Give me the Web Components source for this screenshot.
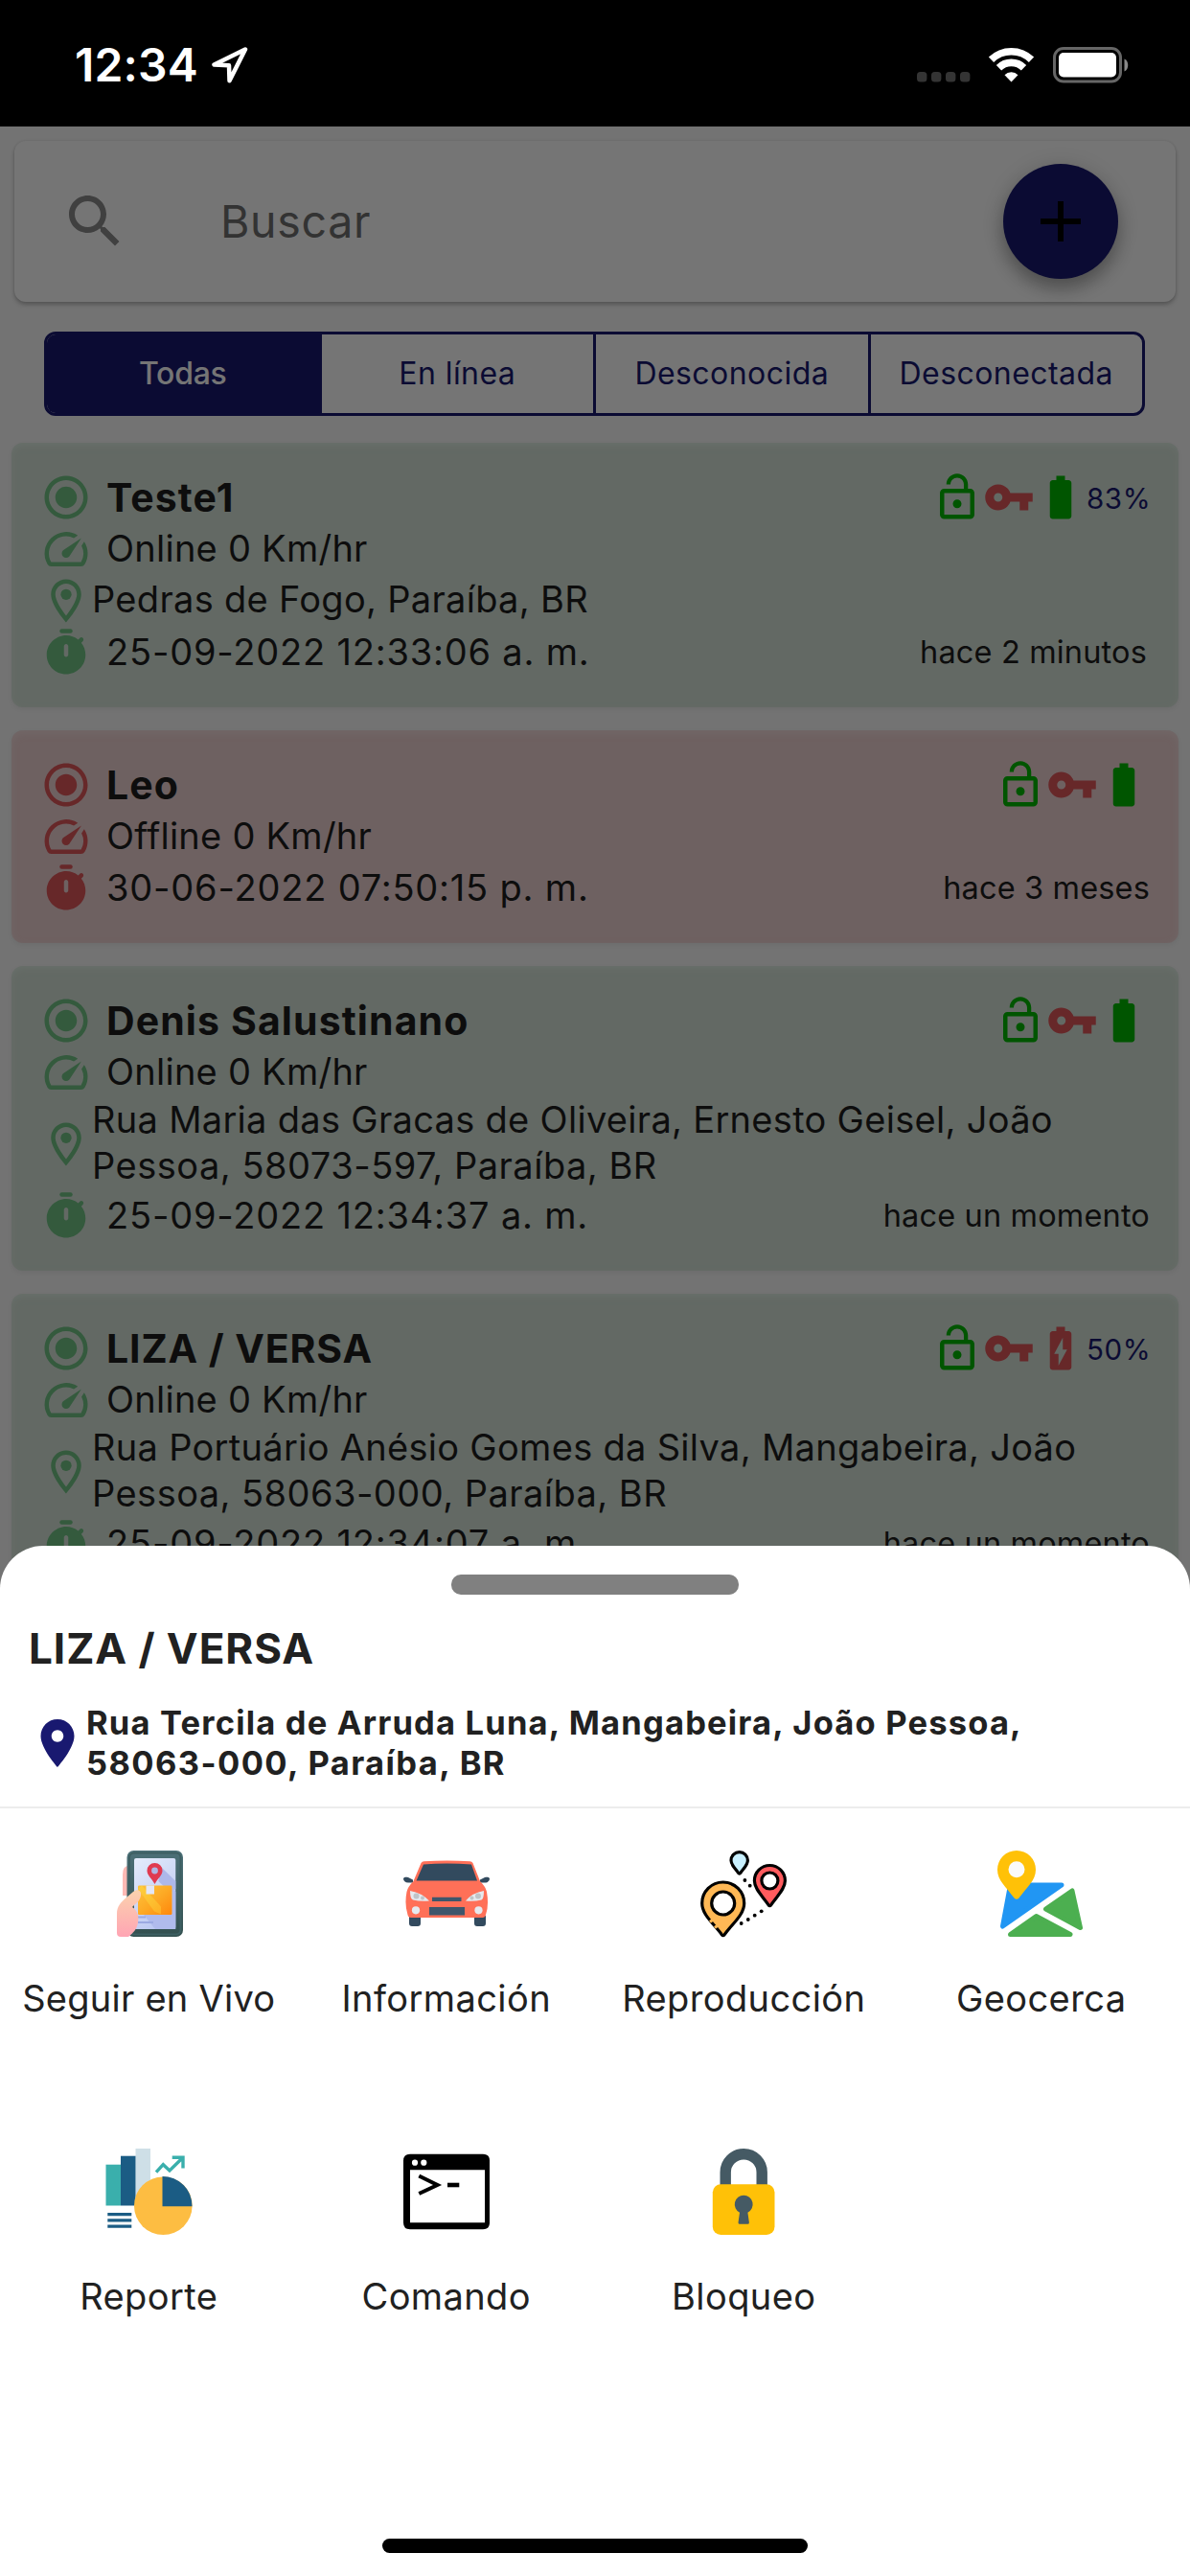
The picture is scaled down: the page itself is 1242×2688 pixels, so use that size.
<!DOCTYPE html>
<html lang="es">
<head>
<meta charset="utf-8">
<title>Dispositivos</title>
<style>
  html, body {
    margin: 0;
    height: 100%;
    background: #fafafa;
  }

  body {
    font-family: Inter, Roboto, "Liberation Sans", sans-serif;
    color: #212121;
    overflow: hidden;
  }
</style>
</head>
<body>
<tracker-app>
  <status-bar slot="status">12:34</status-bar>

  <search-bar>Buscar</search-bar>

  <filter-tabs>
    <filter-tab selected>Todas</filter-tab>
    <filter-tab>En línea</filter-tab>
    <filter-tab>Desconocida</filter-tab>
    <filter-tab>Desconectada</filter-tab>
  </filter-tabs>

  <device-card battery="full">
    <span slot="name">Teste1</span>
    <span slot="level">83%</span>
    <span slot="speed">Online 0 Km/hr</span>
    <span slot="address">Pedras de Fogo, Paraíba, BR</span>
    <span slot="date">25-09-2022 12:33:06 a. m.</span>
    <span slot="ago" style="margin-right:3px">hace 2 minutos</span>
  </device-card>

  <device-card offline battery="full">
    <span slot="name">Leo</span>
    <span slot="speed">Offline 0 Km/hr</span>
    <span slot="date">30-06-2022 07:50:15 p. m.</span>
    <span slot="ago">hace 3 meses</span>
  </device-card>

  <device-card battery="full">
    <span slot="name">Denis Salustinano</span>
    <span slot="speed">Online 0 Km/hr</span>
    <span slot="address">Rua Maria das Gracas de Oliveira, Ernesto Geisel, João<br><span style="letter-spacing:.5px">Pessoa, 58073-597, Paraíba, BR</span></span>
    <span slot="date">25-09-2022 12:34:37 a. m.</span>
    <span slot="ago">hace un momento</span>
  </device-card>

  <device-card battery="charging">
    <span slot="name" style="letter-spacing:.9px">LIZA / VERSA</span>
    <span slot="level">50%</span>
    <span slot="speed">Online 0 Km/hr</span>
    <span slot="address">Rua Portuário Anésio Gomes da Silva, Mangabeira, João<br><span style="letter-spacing:.45px">Pessoa, 58063-000, Paraíba, BR</span></span>
    <span slot="date">25-09-2022 12:34:07 a. m.</span>
    <span slot="ago">hace un momento</span>
  </device-card>

  <bottom-sheet slot="sheet">
    <span slot="title">LIZA / VERSA</span>
    <span slot="address">Rua Tercila de Arruda Luna, Mangabeira, João Pessoa,<br><span style="letter-spacing:1.4px">58063-000, Paraíba, BR</span></span>
    <action-tile icon="live" style="letter-spacing:.25px">Seguir en Vivo</action-tile>
    <action-tile icon="car">Información</action-tile>
    <action-tile icon="route">Reproducción</action-tile>
    <action-tile icon="fence">Geocerca</action-tile>
    <action-tile icon="report">Reporte</action-tile>
    <action-tile icon="command">Comando</action-tile>
    <action-tile icon="padlock">Bloqueo</action-tile>
  </bottom-sheet>
</tracker-app>

<script>
// Single colour glyphs, 24 unit grid
const glyphs = {
  search: '<path d="M15.5 14h-.79l-.28-.27C15.41 12.59 16 11.11 16 9.5 16 5.91 13.09 3 9.5 3S3 5.91 3 9.5 5.91 16 9.5 16c1.61 0 3.09-.59 4.23-1.57l.27.28v.79l5 4.99L20.49 19l-4.99-5zm-6 0C7.01 14 5 11.99 5 9.5S7.01 5 9.5 5 14 7.01 14 9.5 11.99 14 9.5 14z"/>',
  add: '<path d="M19 13h-6v6h-2v-6H5v-2h6V5h2v6h6v2z"/>',
  radio: '<path d="M12 7c-2.76 0-5 2.24-5 5s2.24 5 5 5 5-2.24 5-5-2.24-5-5-5zm0-5C6.48 2 2 6.48 2 12s4.48 10 10 10 10-4.48 10-10S17.52 2 12 2zm0 18c-4.42 0-8-3.58-8-8s3.58-8 8-8 8 3.58 8 8-3.58 8-8 8z"/>',
  speed: '<path d="M20.38 8.57l-1.23 1.85a8 8 0 0 1-.22 7.58H5.07A8 8 0 0 1 15.58 6.85l1.85-1.23A10 10 0 0 0 3.35 19a2 2 0 0 0 1.72 1h13.85a2 2 0 0 0 1.74-1 10 10 0 0 0-.27-10.44zm-9.79 6.84a2 2 0 0 0 2.83 0l5.66-8.49-8.49 5.66a2 2 0 0 0 0 2.83z"/>',
  place: '<path d="M12 2C8.13 2 5 5.13 5 9c0 5.25 7 13 7 13s7-7.75 7-13c0-3.87-3.13-7-7-7zM7 9c0-2.76 2.24-5 5-5s5 2.24 5 5c0 2.88-2.88 7.19-5 9.88C9.92 16.21 7 11.85 7 9z"/><circle cx="12" cy="9" r="2.5"/>',
  placeFill: '<path d="M12 2C8.13 2 5 5.13 5 9c0 5.25 7 13 7 13s7-7.75 7-13c0-3.87-3.13-7-7-7zm0 9.5c-1.38 0-2.5-1.12-2.5-2.5s1.12-2.5 2.5-2.5 2.5 1.12 2.5 2.5-1.12 2.5-2.5 2.5z"/>',
  timer: '<rect x="9" y="1" width="6" height="2" rx="1"/><path fill-rule="evenodd" d="M19.03 7.39l.75-.75c.38-.38.39-1.01 0-1.4l-.01-.01c-.39-.39-1.01-.38-1.4 0l-.75.75C16.07 4.74 14.12 4 12 4c-4.8 0-8.88 3.96-9 8.76C2.87 17.84 6.94 22 12 22c4.98 0 9-4.03 9-9 0-2.12-.74-4.07-1.97-5.61zM13 13c0 .55-.45 1-1 1s-1-.45-1-1V9c0-.55.45-1 1-1s1 .45 1 1v4z"/>',
  lockOpen: '<path d="M12 17c1.1 0 2-.9 2-2s-.9-2-2-2-2 .9-2 2 .9 2 2 2zm6-9h-1V6c0-2.76-2.24-5-5-5S7 3.24 7 6h1.9c0-1.71 1.39-3.1 3.1-3.1 1.71 0 3.1 1.39 3.1 3.1v2H6c-1.1 0-2 .9-2 2v10c0 1.1.9 2 2 2h12c1.1 0 2-.9 2-2V10c0-1.1-.9-2-2-2zm0 12H6V10h12v10z"/>',
  key: '<path d="M12.65 10C11.83 7.67 9.61 6 7 6c-3.31 0-6 2.69-6 6s2.69 6 6 6c2.61 0 4.83-1.67 5.65-4H17v4h4v-4h2v-4H12.65zM7 14c-1.1 0-2-.9-2-2s.9-2 2-2 2 .9 2 2-.9 2-2 2z"/>',
  batteryFull: '<path d="M15.67 4H14V2h-4v2H8.33C7.6 4 7 4.6 7 5.33v15.33C7 21.4 7.6 22 8.33 22h7.33c.74 0 1.34-.6 1.34-1.33V5.33C17 4.6 16.4 4 15.67 4z"/>',
  batteryCharging: '<path d="M15.67 4H14V2h-4v2H8.33C7.6 4 7 4.6 7 5.33v15.33C7 21.4 7.6 22 8.33 22h7.33c.74 0 1.34-.6 1.34-1.33V5.33C17 4.6 16.4 4 15.67 4zM11 20v-5.5H9L13 7v5.5h2L11 20z"/>'
};

// Colour pictures of the action grid, 90 unit grid
const pictures = {
  live: `
    <defs>
      <linearGradient id="skin" x1=".5" y1="0" x2=".5" y2="1"><stop offset="0" stop-color="#fbd2ad"/><stop offset="1" stop-color="#ffa5b4"/></linearGradient>
      <linearGradient id="body" x1="0" y1="0" x2="0" y2="1"><stop offset="0" stop-color="#4c7078"/><stop offset="1" stop-color="#33504f"/></linearGradient>
      <linearGradient id="screen" x1="0" y1="0" x2=".5" y2="1"><stop offset="0" stop-color="#e4ecfb"/><stop offset="1" stop-color="#bcc8f2"/></linearGradient>
      <linearGradient id="parcel" x1="0" y1="0" x2="1" y2="1"><stop offset="0" stop-color="#fdc33c"/><stop offset=".5" stop-color="#fdaa25"/><stop offset="1" stop-color="#ff870c"/></linearGradient>
    </defs>
    <path d="M26 16h-3q-5 1-5 9v22h8z" fill="#fdb9b4"/>
    <rect x="22.500" y="0" width="58.500" height="90" rx="7" fill="url(#body)"/>
    <rect x="25" y="2.500" width="53.500" height="85" rx="5" fill="none" stroke="#3d5f62" stroke-width="2"/>
    <rect x="30" y="8" width="43.300" height="74" rx="2" fill="url(#screen)"/>
    <path d="M58 17l15.300 15v8l-5 4-13-12z" fill="#adb8ea"/>
    <path d="M40 67l12 15h21.300V43l-4-5v29z" fill="#b0bbec"/>
    <path d="M51.500 13a8 8 0 0 1 8 8c0 5-5 8-8 14-3-6-8-9-8-14a8 8 0 0 1 8-8z" fill="#e03a50"/>
    <circle cx="51.500" cy="21" r="3.400" fill="#b0b6e4"/>
    <rect x="34" y="36.500" width="35.500" height="30.500" rx="1.200" fill="url(#parcel)"/>
    <path d="M34 40l4-3.500 20 22v8l-7-3z" fill="#fff04a" opacity=".3"/>
    <path d="M42.500 36.500H51v9h-8.500z" fill="#e3e6f5"/>
    <path d="M34 69.500h8M34 75h16" stroke="#9ba9e2" stroke-width="1.800"/>
    <path d="M24 62l5-3v8z" fill="#33474c"/>
    <path d="M12 86V66c0-8 4-12 10-17l7-6c5-4 9-1 8 4-1 6-5 8-9 12 6 4 7 10 6 16-1 7-5 11-10 15h-8q-4 0-4-4z" fill="url(#skin)"/>`,
  car: `
    <path d="M6 68h12v8q0 3-3 3H9q-3 0-3-3zM74 68h12v8q0 3-3 3h-6q-3 0-3-3z" fill="#324a5e"/>
    <path d="M10 33.500H5c-3 0-5-2-5-4s3-2 5-1.500l5 2.500zM80 33.500h5c3 0 5-2 5-4s-3-2-5-1.500l-5 2.500z" fill="#324a5e"/>
    <path d="M18.500 13q1-1.500 3-1.700 24-1.600 48 0 2 .2 3 1.700l7.500 19q6 6 7 11 2.500 14-1 24-.5 3-3.500 3H8q-3 0-3.500-3-3.500-11-1-24 1-5 7-11z" fill="#ff7058"/>
    <path d="M21 14.500q24-2.200 50 0l6 17H13.500z" fill="#324a5e"/>
    <path d="M7 42q12 2 20 10.500-9 1-17-1-3-1-3-9.500zM84 42q-12 2-19 10.500 9 1 16.500-1 2.500-1 2.500-9.500z" fill="#e6e9ee"/>
    <circle cx="13.500" cy="47.500" r="3" fill="#bfc4c8"/><circle cx="20" cy="49.500" r="2" fill="#bfc4c8"/>
    <circle cx="78" cy="47.500" r="3" fill="#bfc4c8"/><circle cx="71.500" cy="49.500" r="2" fill="#bfc4c8"/>
    <path d="M30 48.700h30.500v4.300H30zM27 59h37v8.500H27z" fill="#3f566b"/>
    <circle cx="13" cy="62.300" r="4.100" fill="#e6e9ee"/><circle cx="78.500" cy="62.300" r="4.100" fill="#e6e9ee"/>`,
  route: `
    <g stroke="#000" stroke-width="3.200" stroke-linejoin="round">
      <path d="M40.700 1.600a8.700 8.700 0 0 1 8.700 8.700c0 5-4.500 8.500-7.500 13q-1.200 1.600-2.400 0c-3-4.500-7.500-8-7.500-13a8.700 8.700 0 0 1 8.700-8.700z" fill="#c8f0ff"/>
      <path d="M72.400 15.500a16 16 0 0 1 16 16c0 9-9 16.500-14.600 25.200q-1.400 1.800-2.800 0C65.400 48 56.400 40.500 56.400 31.500a16 16 0 0 1 16-16z" fill="#ff5b5e"/>
      <circle cx="72.400" cy="31.500" r="8.500" fill="#fff"/>
      <path d="M23.700 33a22 22 0 0 1 22 22c0 12-12 21-20.600 32.700q-1.400 1.800-2.800 0C13.700 76 1.700 67 1.700 55a22 22 0 0 1 22-22z" fill="#ffb855"/>
      <circle cx="23.700" cy="55" r="12" fill="#fff"/>
    </g>
    <path d="M10 74.500l2.600-2M15 80.500l2.600-2" stroke="#ffb855" stroke-width="3"/>
    <g fill="#000"><circle cx="46.400" cy="31" r="1.900"/><circle cx="51.700" cy="36.700" r="1.900"/><circle cx="42.700" cy="76" r="1.900"/><circle cx="49.800" cy="72" r="1.900"/><circle cx="56.700" cy="67.700" r="1.900"/><circle cx="63.700" cy="63.300" r="1.900"/></g>`,
  fence: `
    <g stroke-width="5" stroke-linejoin="round">
      <path d="M12.500 36H66L4.500 79z" fill="#2196f3" stroke="#2196f3"/>
      <path d="M77 42l8.500 38.500L49.500 61z" fill="#4caf50" stroke="#4caf50"/>
      <path d="M39.500 68.500L75 87.500H12.500z" fill="#4caf50" stroke="#4caf50"/>
    </g>
    <path d="M19 0a20 20 0 0 1 20 20c0 11-9 18-17.500 29.500q-2.500 2.500-5 0C8 38-1 31-1 20A20 20 0 0 1 19 0z" fill="#ffc107"/>
    <circle cx="19" cy="19.700" r="8.500" fill="#fafafa"/>`,
  report: `
    <path d="M.5 16.700H16v42.800H.5z" fill="#3aafac"/>
    <path d="M31.500 0H47v50H31.500z" fill="#cedfe7"/>
    <path d="M16 7.700h15.500v51.800H16z" fill="#1b5c84"/>
    <path d="M2.300 68.700h25M2.300 74.900h25M2.300 81.100h25" stroke="#1b5c84" stroke-width="3.300"/>
    <circle cx="60.300" cy="59.700" r="30.300" fill="#fdbd42"/>
    <path d="M59.500 60.200V28.900a31 31 0 0 1 31 31.300z" fill="#1b5c84"/>
    <path d="M53 24.700l7.300-8L67 23 81 9.200M69.700 9.200H81V20.500" fill="none" stroke="#3aafac" stroke-width="3.400"/>`,
  command: `
    <path fill="#000" fill-rule="evenodd" d="M7 5.700h76q7 0 7 7v64.600q0 7-7 7H7q-7 0-7-7V12.700q0-7 7-7zM7 22.300v55h78v-55z"/>
    <circle cx="12" cy="14.700" r="3.100" fill="#fff"/><circle cx="21.300" cy="14.700" r="3.100" fill="#fff"/>
    <path d="M16.300 28.500L35.500 38 16.300 47" fill="none" stroke="#000" stroke-width="4"/>
    <path d="M46 38h12.300" stroke="#000" stroke-width="4.600"/>`,
  padlock: `
    <path d="M26.200 40V24.700a19 19 0 0 1 38 0V40" fill="none" stroke="#455a64" stroke-width="11.400"/>
    <rect x="12.800" y="37.300" width="64.700" height="52.700" rx="8.500" fill="#ffc107"/>
    <path d="M45.200 48.700a9.500 9.500 0 0 1 4.200 18l1.500 10.500q0 1.600-1.500 1.600h-8.400q-1.500 0-1.500-1.600L41 66.700a9.500 9.500 0 0 1 4.200-18z" fill="#455a64"/>`
};

// Attaches an open shadow root filled with the given markup
class BaseElement extends HTMLElement {
  constructor() {
    super();
    const template = document.createElement('template');
    template.innerHTML = this.markup;
    this.attachShadow({mode: 'open'}).appendChild(template.content.cloneNode(true));
  }
}

customElements.define('app-icon', class extends HTMLElement {
  connectedCallback() {
    const name = this.getAttribute('name');
    const box = glyphs[name] ? 24 : 90;
    const root = this.shadowRoot || this.attachShadow({mode: 'open'});
    root.innerHTML = `
      <style>
        :host { display: block; flex: none; width: 54px; height: 54px; }
        svg { display: block; width: 100%; height: 100%; overflow: visible; }
      </style>
      <svg viewBox="0 0 ${box} ${box}" fill="currentColor">${glyphs[name] || pictures[name]}</svg>
    `;
  }
});

customElements.define('tracker-app', class extends BaseElement {
  get markup() {
    return `
      <style>
        :host { display: flex; flex-direction: column; position: relative; width: 1242px; height: 2688px; overflow: hidden; }
        main { position: relative; flex: 1; display: flex; flex-direction: column; min-height: 0; overflow: hidden; background: #fafafa; }
        .scrim { position: absolute; inset: 0; background: rgba(0, 0, 0, .54); }
      </style>
      <slot name="status"></slot>
      <main>
        <slot></slot>
        <div class="scrim"></div>
      </main>
      <slot name="sheet"></slot>
    `;
  }
});

customElements.define('status-bar', class extends BaseElement {
  get markup() {
    return `
      <style>
        :host { display: flex; flex: none; align-items: center; justify-content: space-between; box-sizing: border-box; height: 132px; padding: 3px 64px 0 78px; background: #000; color: #fff; font-size: 48px; font-weight: 600; }
        div { display: flex; align-items: center; }
        .time { gap: 13px; }
        .clock { letter-spacing: .2px; }
        svg { display: block; }
      </style>
      <div class="time">
        <span class="clock"><slot></slot></span>
        <svg width="40" height="40" viewBox="0 0 40 40" fill="none" stroke="#fff" stroke-width="4.500" stroke-linejoin="round"><path d="M36 3.500L3.500 19.500l15.500.8.500 16z"/></svg>
      </div>
      <svg width="222" height="38" viewBox="0 0 222 38">
        <g fill="#343434"><rect x="1" y="26" width="10.400" height="10.400" rx="3.500"/><rect x="16" y="26" width="10.400" height="10.400" rx="3.500"/><rect x="31" y="26" width="10.400" height="10.400" rx="3.500"/><rect x="46" y="26" width="10.400" height="10.400" rx="3.500"/></g>
        <g fill="none" stroke="#fff" stroke-width="7.600"><path d="M78.500 13.300a30 30 0 0 1 42 0"/><path d="M86.500 21.700a18.500 18.500 0 0 1 26 0"/></g>
        <path d="M92.500 29.200a10 10 0 0 1 14 0l-7 7.300z" fill="#fff"/>
        <rect x="144.500" y="1.500" width="69" height="34.500" rx="9.500" fill="none" stroke="#666" stroke-width="3"/>
        <rect x="149" y="6" width="60" height="25.500" rx="5" fill="#fff"/>
        <path d="M217.500 12.500c5 2 5 11 0 13z" fill="#8a8a8a"/>
      </svg>
    `;
  }
});

customElements.define('search-bar', class extends BaseElement {
  get markup() {
    return `
      <style>
        :host { display: flex; flex: none; align-items: center; box-sizing: border-box; height: 168px; margin: 15px 15px 0; padding: 0 60px 0 48px; border-radius: 12px; background: #fff; box-shadow: 0 3px 4px rgba(0, 0, 0, .24), 0 0 3px rgba(0, 0, 0, .1); }
        .lens { width: 72px; height: 72px; color: #8c8c8c; }
        .hint { flex: 1; margin-left: 95px; font-size: 46.5px; letter-spacing: .7px; color: #6f6f6f; }
        button { display: flex; align-items: center; justify-content: center; width: 120px; height: 120px; padding: 0; border: 0; border-radius: 50%; background: #191970; color: #000; box-shadow: 0 10px 18px rgba(0, 0, 0, .28), 0 3px 30px rgba(0, 0, 0, .12); }
        button app-icon { width: 72px; height: 72px; }
      </style>
      <app-icon class="lens" name="search"></app-icon>
      <span class="hint"><slot></slot></span>
      <button aria-label="Agregar"><app-icon name="add"></app-icon></button>
    `;
  }
});

customElements.define('filter-tabs', class extends BaseElement {
  get markup() {
    return `
      <style>
        :host { display: flex; flex: none; box-sizing: border-box; height: 88px; margin: 31px 47px 28px 46px; border: 3px solid #191970; border-radius: 12px; overflow: hidden; background: #fff; }
      </style>
      <slot></slot>
    `;
  }
});

customElements.define('filter-tab', class extends BaseElement {
  get markup() {
    return `
      <style>
        :host { display: flex; flex: 1; align-items: center; justify-content: center; padding-bottom: 1px; border-left: 3px solid #191970; color: #191970; font-size: 32px; letter-spacing: .45px; }
        :host(:first-child) { border-left: 0; }
        :host([selected]) { background: #191970; color: #fff; font-weight: 500; letter-spacing: -.3px; }
      </style>
      <slot></slot>
    `;
  }
});

customElements.define('device-card', class extends HTMLElement {
  connectedCallback() {
    const charging = this.getAttribute('battery') === 'charging';
    const address = this.querySelector('[slot=address]') ? `
      <div class="row place">
        <app-icon name="place"></app-icon>
        <slot name="address"></slot>
      </div>` : '';
    const level = this.querySelector('[slot=level]') ? '<span class="level"><slot name="level"></slot></span>' : '';

    this.attachShadow({mode: 'open'}).innerHTML = `
      <style>
        :host { --tone: #71c485; display: block; flex: none; margin: 0 12px 24px; padding: 30px; border-radius: 12px; background: #d7e4da; box-shadow: 0 2px 5px rgba(0, 0, 0, .06), inset 0 3px 7px rgba(240, 255, 244, .5); font-size: 38px; line-height: 48px; }
        :host([offline]) { --tone: #e0575b; background: #efd3d3; box-shadow: 0 2px 5px rgba(0, 0, 0, .06), inset 0 3px 7px rgba(255, 240, 240, .5); }
        .row { display: flex; align-items: center; min-height: 54px; color: #1e1e1e; }
        .row > app-icon { color: var(--tone); }
        .text { flex: 1; margin-left: 15px; padding-bottom: 3px; }
        .name { font-size: 41px; font-weight: 700; letter-spacing: 1.1px; padding-bottom: 1px; }
        .speed { letter-spacing: .25px; }
        .date { letter-spacing: .8px; }
        .place ::slotted(span) { margin: -2px 0 2px; letter-spacing: .3px; }
        .row .open { color: #00b900; }
        .row .key { color: #e0575b; }
        .row .battery { color: ${charging ? '#e0575b' : '#00b900'}; }
        .level { width: 66px; font-size: 29.5px; letter-spacing: .6px; color: #191970; padding-top: 2px; }
        .ago { font-size: 32.5px; letter-spacing: .15px; padding-bottom: 1px; }
      </style>
      <div class="row">
        <app-icon name="radio"></app-icon>
        <span class="text name"><slot name="name"></slot></span>
        <app-icon class="open" name="lockOpen"></app-icon>
        <app-icon class="key" name="key"></app-icon>
        <app-icon class="battery" name="${charging ? 'batteryCharging' : 'batteryFull'}"></app-icon>
        ${level}
      </div>
      <div class="row">
        <app-icon name="speed"></app-icon>
        <span class="text speed"><slot name="speed"></slot></span>
      </div>
      ${address}
      <div class="row">
        <app-icon name="timer"></app-icon>
        <span class="text date"><slot name="date"></slot></span>
        <span class="ago"><slot name="ago"></slot></span>
      </div>
    `;
  }
});

customElements.define('bottom-sheet', class extends BaseElement {
  get markup() {
    return `
      <style>
        :host { position: absolute; left: 0; right: 0; bottom: 0; height: 1075px; display: flex; flex-direction: column; border-radius: 45px 45px 0 0; background: #fff; }
        .handle { flex: none; align-self: center; width: 300px; height: 21px; margin-top: 30px; border-radius: 10px; background: #808080; }
        .title { margin: 29px 30px 0; font-size: 44px; line-height: 54px; font-weight: 700; letter-spacing: .95px; }
        .address { display: flex; align-items: center; height: 84px; margin: 30px 30px 0; padding-bottom: 24px; font-size: 34.5px; line-height: 42px; font-weight: 700; letter-spacing: 1.18px; white-space: nowrap; }
        .address app-icon { width: 60px; height: 60px; color: #191970; }
        hr { width: 100%; margin: 0; border: 0; height: 2px; background: #ececec; }
        .grid { display: grid; grid-template-columns: repeat(4, 310.5px); grid-auto-rows: 310.5px; }
        .home { width: 444px; height: 15px; margin: auto auto 24px; border-radius: 8px; background: #000; }
      </style>
      <div class="handle"></div>
      <div class="title"><slot name="title"></slot></div>
      <div class="address">
        <app-icon name="placeFill"></app-icon>
        <slot name="address"></slot>
      </div>
      <hr>
      <div class="grid"><slot></slot></div>
      <div class="home"></div>
    `;
  }
});

customElements.define('action-tile', class extends BaseElement {
  get markup() {
    return `
      <style>
        :host { display: flex; flex-direction: column; align-items: center; padding-top: 44px; font-size: 38px; line-height: 48px; letter-spacing: .4px; white-space: nowrap; }
        app-icon { width: 90px; height: 90px; margin-bottom: 40px; }
      </style>
      <app-icon name="${this.getAttribute('icon')}"></app-icon>
      <span><slot></slot></span>
    `;
  }
});
</script>
</body>
</html>
